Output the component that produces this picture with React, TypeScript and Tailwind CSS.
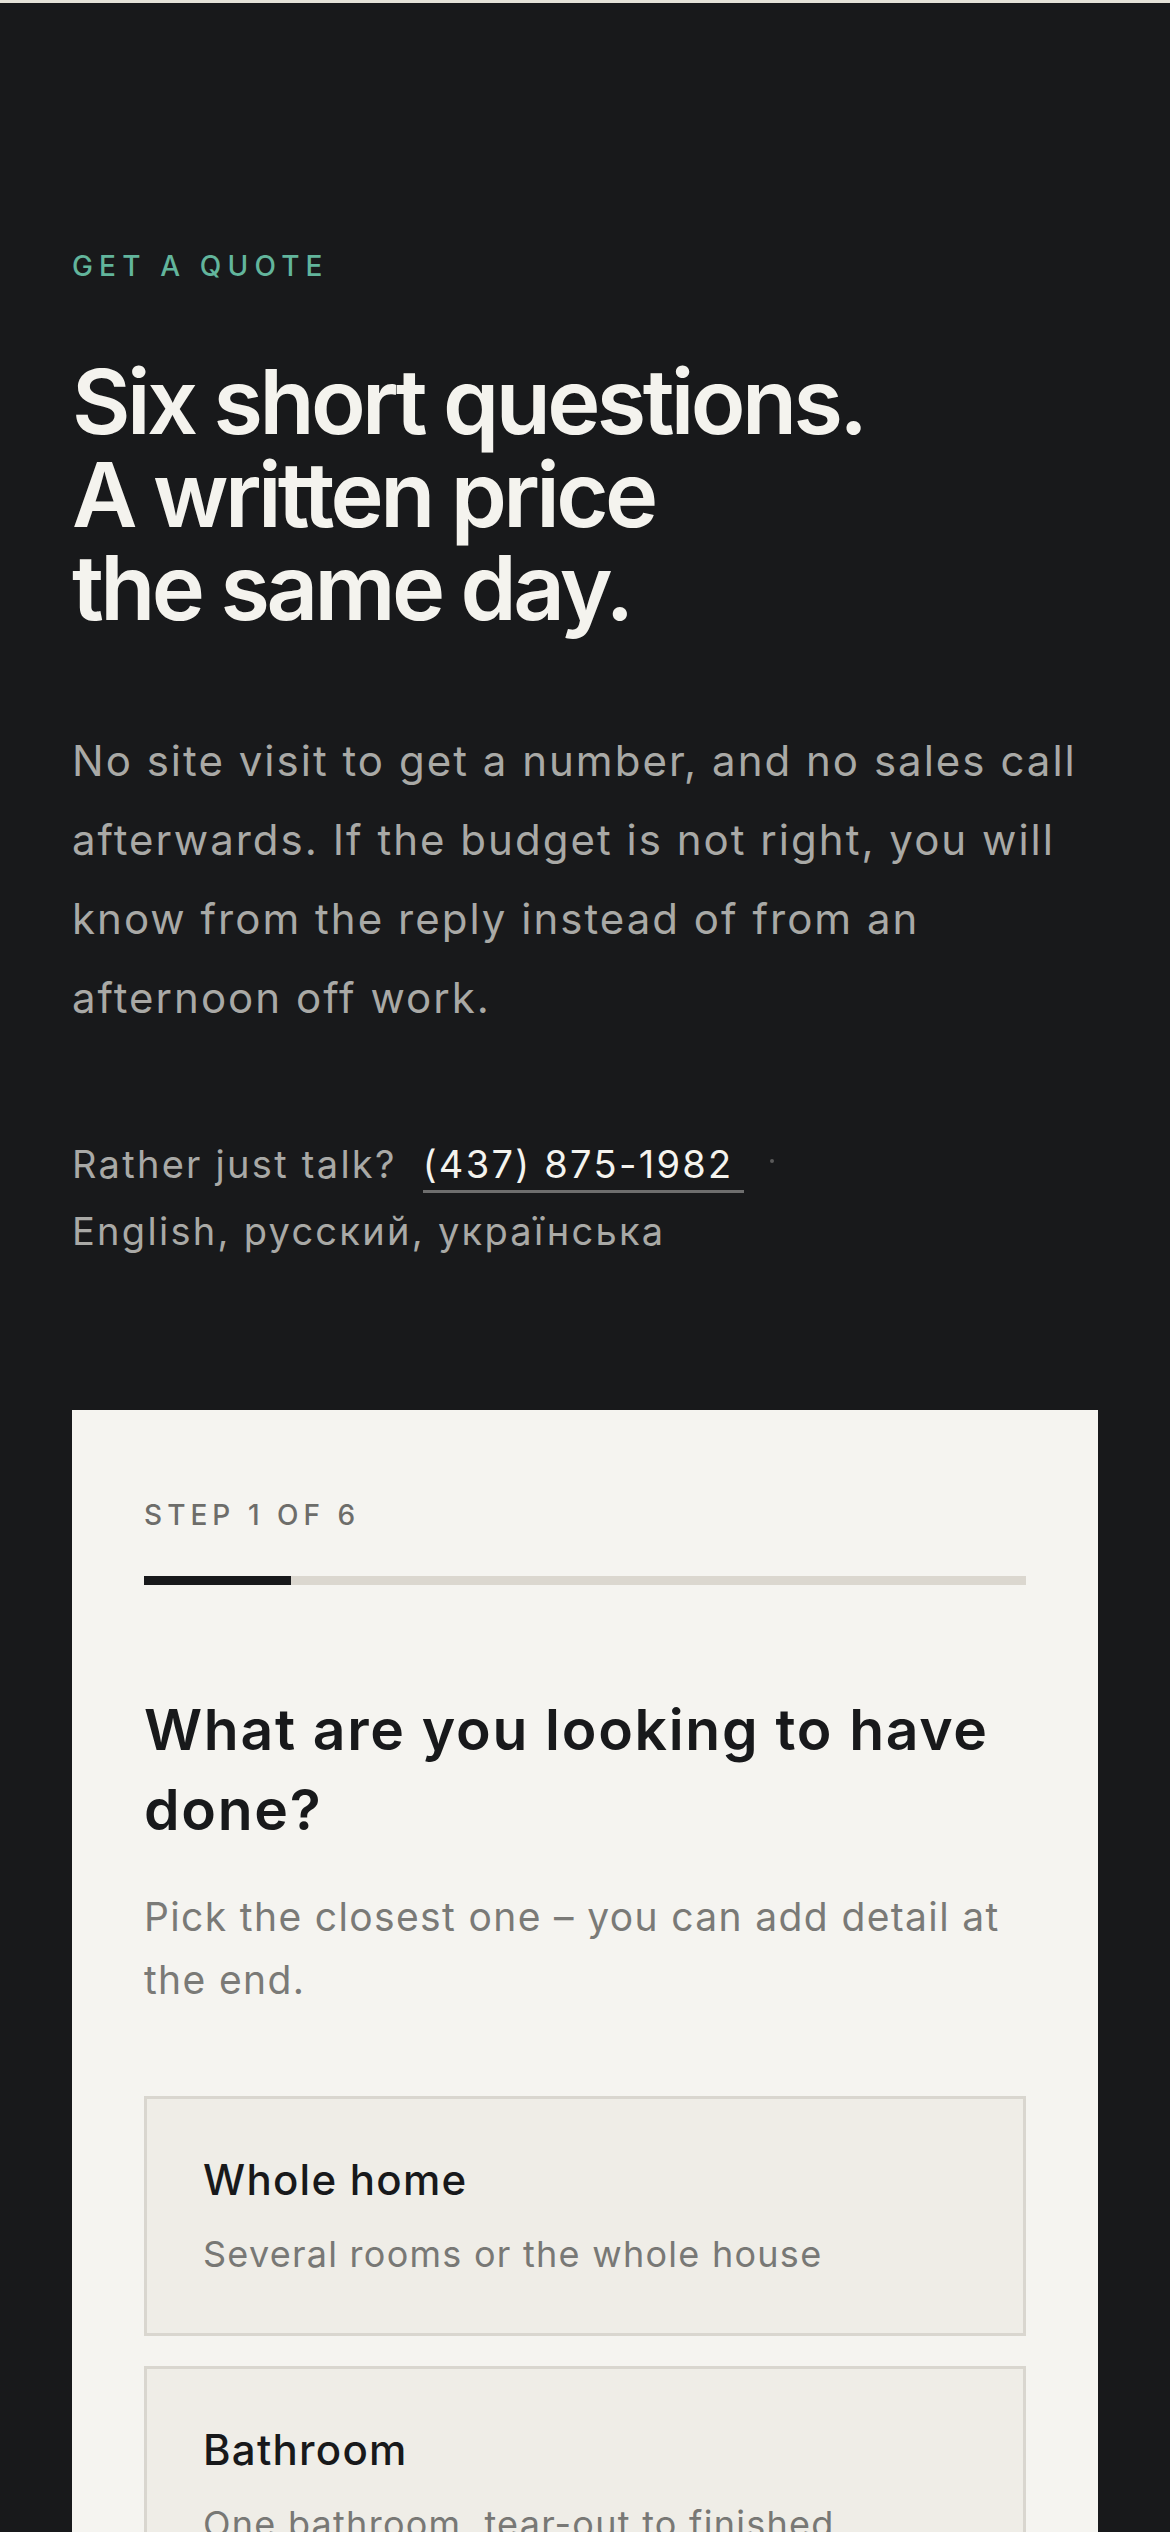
import React from "react";

const options = [
  { title: "Whole home", desc: "Several rooms or the whole house" },
  { title: "Bathroom", desc: "One bathroom, tear-out to finished" },
  { title: "Kitchen", desc: "Cabinets, counters, plumbing and lighting" },
  { title: "Basement", desc: "Finishing or reworking the lower level" },
];

export default function App() {
  return (
    <div
      className="min-h-screen bg-[#18191b] text-[#f4f3ee]"
      style={{ fontFamily: "Inter, 'Noto Sans', sans-serif" }}
    >
      <div className="h-[3px] bg-[#e4e2d8]" />
      <div className="px-[72px] pt-[246px]">
        <p className="text-[28px] leading-[34px] tracking-[0.22em] text-[#62b59c] font-medium">
          GET A QUOTE
        </p>
        <h1 className="mt-[72px] text-[90px] leading-[93px] font-semibold tracking-[-0.04em] text-[#f4f3ee]">
          Six short questions.
          <br />A written price
          <br />
          the same day.
        </h1>
        <p className="mt-[87px] text-[42px] leading-[79px] text-[#a9a9a6] tracking-[0.048em]">
          No site visit to get a number, and no sales call afterwards. If the budget is not right,
          you will know from the reply instead of from an afternoon off work.
        </p>
        <div className="mt-[99px] flex flex-wrap items-baseline gap-x-[26px] gap-y-[10px] text-[38px] leading-[57px] text-[#a9a9a6] tracking-[0.06em]">
          <span>Rather just talk?</span>
          <a
            href="#"
            className="leading-[46px] pb-[3px] pr-[10px] border-b-[3px] border-[#6e6e6e] text-[#f4f3ee] tracking-[0.06em]"
          >
            (437) 875-1982
          </a>
          <span className="self-center h-[4px] w-[4px] rounded-full bg-[#5a5a5a] -translate-y-[4px]" />
          <span>English, русский, українська</span>
        </div>

        <div className="mt-[150px] bg-[#f5f4f0] px-[72px] pt-[88px] pb-[120px]">
          <p className="text-[28px] leading-[34px] tracking-[0.18em] text-[#6d6d6a] font-medium">
            STEP 1 OF 6
          </p>
          <div className="mt-[44px] h-[9px] bg-[#dbd7cf] flex">
            <div className="h-full w-[147px] bg-[#18191b]" />
          </div>
          <h2 className="mt-[105px] text-[57px] leading-[80px] font-semibold tracking-[0.03em] text-[#18191b]">
            What are you looking to have done?
          </h2>
          <p className="mt-[35px] text-[39px] leading-[63px] text-[#7a7a77] tracking-[0.035em]">
            Pick the closest one – you can add detail at the end.
          </p>
          <div className="mt-[85px] flex flex-col gap-[30px]">
            {options.map((o) => (
              <button
                key={o.title}
                className="text-left border-[3px] border-[#d9d6cf] bg-[#efede7] px-[56px] pt-[54px] pb-[52px]"
              >
                <div className="text-[42px] leading-[54px] font-medium text-[#18191b] tracking-[0.03em]">
                  {o.title}
                </div>
                <div className="mt-[20px] text-[36px] leading-[54px] text-[#787875] tracking-[0.035em]">
                  {o.desc}
                </div>
              </button>
            ))}
          </div>
        </div>
      </div>
    </div>
  );
}
